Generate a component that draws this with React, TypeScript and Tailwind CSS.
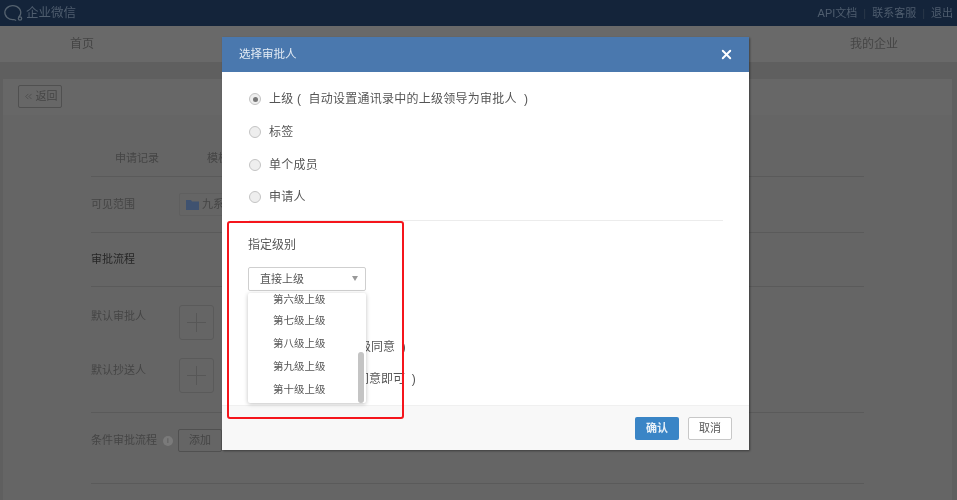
import { ChevronsLeft, X } from "lucide-react";

const font = { fontFamily: '"Liberation Sans", "Noto Sans CJK SC", sans-serif' };

const Radio = ({ label, checked = false }: { label: string; checked?: boolean }) => (
  <div className="flex h-[32.7px] items-center gap-[8px] text-[12px] tracking-[0.25px] text-[#555]">
    <span className="flex h-[12px] w-[12px] items-center justify-center rounded-full border border-[#c4c4c4] bg-[#eee]">
      {checked && <span className="h-[5px] w-[5px] rounded-full bg-[#777]" />}
    </span>
    <span className="whitespace-pre">{label}</span>
  </div>
);

const PlusBox = () => (
  <div className="flex h-[35px] w-[35px] items-center justify-center rounded-[3px] border border-[#5a5a5a]">
    <svg width="19" height="19" viewBox="0 0 19 19" stroke="#575757" strokeWidth="1">
      <path d="M9.5 0v19M0 9.5h19" />
    </svg>
  </div>
);

const levels = ["第七级上级", "第八级上级", "第九级上级", "第十级上级"];

export default function App() {
  return (
    <div className="relative h-[500px] w-[957px] overflow-hidden bg-[#5f5f5f] text-[11px] blur-[0.5px]" style={font}>
      {/* 顶部 */}
      <div className="flex h-[26px] items-center justify-between bg-[#14243a] pl-[3px] pr-[4px] text-[#4f5d6e]">
        <div className="flex items-center gap-[2px]">
          <svg width="21" height="20" viewBox="0 0 21 20" fill="none" stroke="#55626f" strokeWidth="1.2">
            <path d="M15.5 14.5a8 7 0 1 0-4.5 2l2.2 1" />
            <circle cx="17" cy="15.5" r="1.7" />
          </svg>
          <span className="text-[12.5px]">企业微信</span>
        </div>
        <div className="flex items-center gap-[6px] text-[11px]">
          <span>API文档</span>
          <span className="text-[#2d3a4b]">|</span>
          <span>联系客服</span>
          <span className="text-[#2d3a4b]">|</span>
          <span>退出</span>
        </div>
      </div>

      {/* 导航 */}
      <div className="flex h-[36px] items-center justify-between bg-[#696969] pl-[70px] pr-[59px] text-[12px] text-[#454545]">
        <span>首页</span>
        <span>我的企业</span>
      </div>

      {/* 内容 */}
      <div className="ml-[3px] mr-[5px] mt-[17px] h-[421px] bg-[#656565] text-[#454545]">
        <div className="flex h-[36px] items-start bg-[#676767] pl-[15px] pt-[6px]">
          <div className="flex h-[23px] w-[44px] items-center justify-center gap-[2px] rounded-[2px] border border-[#505050]">
            <ChevronsLeft size={11} strokeWidth={1.5} />
            <span>返回</span>
          </div>
        </div>
        <div className="ml-[88px] mr-[88px] pt-[35px]">
          <div className="flex h-[27px] items-start border-b border-[#5a5a5a] pl-[24px]">
            <span className="w-[92px]">申请记录</span>
            <span>模板</span>
          </div>
          <div className="flex h-[56px] items-center border-b border-[#5a5a5a]">
            <span className="w-[88px]">可见范围</span>
            <div className="flex h-[23px] w-[60px] items-center gap-[3px] rounded-[2px] border border-[#5f5f5f] pl-[6px]">
              <svg width="13" height="10" viewBox="0 0 13 10" fill="#3f5270">
                <path d="M0 0h5l1 1.5h7V10H0z" />
              </svg>
              <span>九系</span>
            </div>
          </div>
          <div className="flex h-[54px] items-center border-b border-[#5a5a5a] text-[#262626]">审批流程</div>
          <div className="flex h-[126px] flex-col gap-[18px] border-b border-[#5a5a5a] pt-[18px]">
            <div className="flex items-start">
              <span className="mt-[1px] w-[88px] leading-[20px]">默认审批人</span>
              <PlusBox />
            </div>
            <div className="flex items-start">
              <span className="mt-[2px] w-[88px] leading-[20px]">默认抄送人</span>
              <PlusBox />
            </div>
          </div>
          <div className="flex h-[71px] items-start border-b border-[#5a5a5a] pt-[16px]">
            <span className="w-[68px] leading-[23px]">条件审批流程</span>
            <span className="ml-[4px] mt-[7px] flex h-[10px] w-[10px] items-center justify-center rounded-full bg-[#7a7a7a] text-[8px] text-[#555]">
              i
            </span>
            <div className="ml-[5px] flex h-[23px] w-[44px] items-center justify-center rounded-[2px] border border-[#505050]">
              添加
            </div>
          </div>
        </div>
      </div>

      {/* 弹窗 */}
      <div className="absolute left-[222px] top-[37px] flex h-[413px] w-[527px] flex-col bg-white shadow-[1px_1px_2px_rgba(0,0,0,0.4)]">
        <div className="flex h-[35px] items-center justify-between bg-[#4a78ae] pl-[17px] pr-[15px] text-[11.5px] text-[#e4ecf5]">
          <span>选择审批人</span>
          <X size={15} strokeWidth={3} className="text-white" />
        </div>
        <div className="flex-1 pl-[27px] pt-[11px] text-[12px] text-[#555]">
          <Radio checked label="上级 (  自动设置通讯录中的上级领导为审批人  )" />
          <Radio label="标签" />
          <Radio label="单个成员" />
          <Radio label="申请人" />
          <div className="mt-[6px] w-[474px] border-t border-[#ececec]" />
          <div className="-ml-px mt-[15px]">指定级别</div>
          <div className="-ml-px mt-[13px] flex h-[24px] w-[118px] items-center justify-between rounded-[2px] border border-[#cfcfcf] pl-[11px] pr-[7px] text-[11px]">
            <span>直接上级</span>
            <span className="h-0 w-0 border-x-[3px] border-t-[5px] border-x-transparent border-t-[#999]" />
          </div>
          <div className="mt-[46px] whitespace-pre pl-[110px] leading-[20px]">级同意  )</div>
          <div className="mt-[12px] whitespace-pre pl-[108px] leading-[20px]">同意即可  )</div>
        </div>
        <div className="flex h-[45px] items-center justify-end gap-[9px] border-t border-[#f0f0f0] bg-[#f8f8f8] pr-[17px]">
          <div className="flex h-[23px] w-[44px] items-center justify-center rounded-[2px] bg-[#3a85c6] font-bold text-[#e8f1f8]">
            确认
          </div>
          <div className="flex h-[23px] w-[44px] items-center justify-center rounded-[2px] border border-[#c8c8c8] bg-white text-[#555]">
            取消
          </div>
        </div>
      </div>

      {/* 下拉 */}
      <div className="absolute left-[248px] top-[293px] h-[110px] w-[118px] overflow-hidden rounded-[2px] bg-white text-[10.5px] text-[#555] shadow-[0_1px_4px_rgba(0,0,0,0.25)]">
        <div className="h-[12px] overflow-hidden pl-[25px] leading-[12px]">第六级上级</div>
        <div className="mt-[4px]">
          {levels.map((item) => (
            <div key={item} className="flex h-[23px] items-center pl-[25px]">
              {item}
            </div>
          ))}
        </div>
        <div className="absolute bottom-0 right-[2px] h-[51px] w-[6px] rounded-[3px] bg-[#c4c4c4]" />
      </div>

      {/* 红框标注 */}
      <div className="absolute left-[227px] top-[221px] h-[198px] w-[177px] rounded-[3px] border-2 border-[#f5151c]" />
    </div>
  );
}
